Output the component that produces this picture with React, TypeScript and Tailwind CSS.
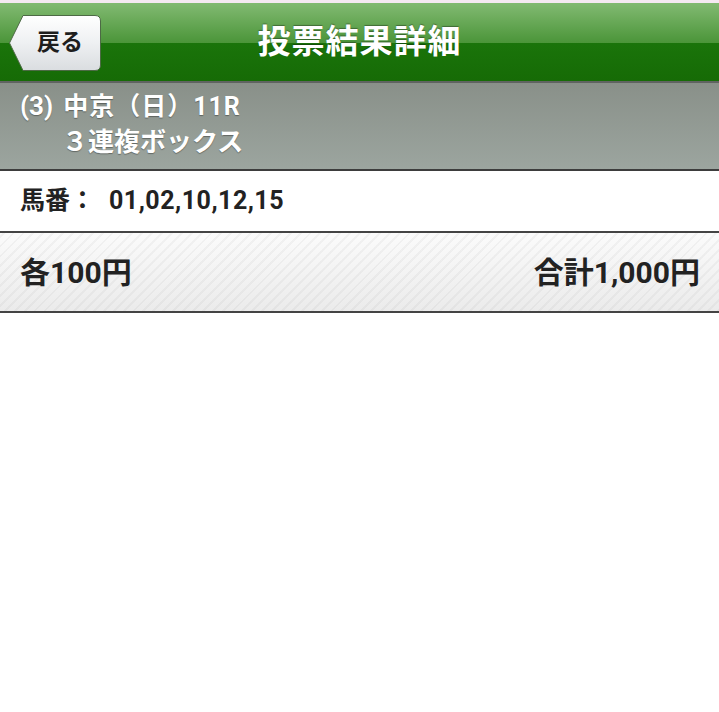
export default function App() {
  return (
    <div className="min-h-[712px] w-full bg-white" style={{ fontFamily: 'Roboto, "Noto Sans CJK JP", sans-serif' }}>
      <div className="h-[3px] bg-[#f5e9f2]" />
      <header className="relative flex h-[80px] items-center justify-center border-b-2 border-[#5f6360] bg-[linear-gradient(to_bottom,#82ba72_0%,#4b9539_51%,#1a740a_51%,#166b06_100%)]">
        <button className="absolute left-[9px] top-[12px] flex h-[56px] w-[92px] items-center justify-center pl-[10px]">
          <svg className="absolute inset-0" width="92" height="56" viewBox="0 0 92 56">
            <defs>
              <linearGradient id="bk" x1="0" y1="0" x2="0" y2="1">
                <stop offset="0" stopColor="#ffffff" />
                <stop offset="0.5" stopColor="#eef0f2" />
                <stop offset="1" stopColor="#dadde0" />
              </linearGradient>
            </defs>
            <path d="M14 0.5 H86 Q91.5 0.5 91.5 6 V50 Q91.5 55.5 86 55.5 H14 L0.5 28 Z" fill="url(#bk)" stroke="#4d6a45" strokeWidth="1" />
          </svg>
          <span className="relative text-[23px] font-bold text-[#1e1e1e]">戻る</span>
        </button>
        <h1 className="text-[33px] font-bold tracking-[1px] text-white [text-shadow:0_-1px_1px_rgba(0,0,0,0.35)]">投票結果詳細</h1>
      </header>
      <section className="flex h-[88px] flex-col justify-center border-b-2 border-[#3d3d3d] bg-[linear-gradient(to_bottom,#899089,#9ca59f)] px-5 pb-[3px] font-bold text-white [text-shadow:0_1px_1px_rgba(0,0,0,0.35)]">
        <div className="flex items-baseline leading-[34px]">
          <span className="text-[26px]">(3)</span>
          <span className="ml-[10px] text-[25px] tracking-[1px]">中京（日）11R</span>
        </div>
        <div className="pl-[42px] text-[26px] leading-[36px]">３連複ボックス</div>
      </section>
      <div className="flex h-[60px] items-center px-5 text-[25px] font-bold text-[#222]">
        <span>馬番：</span>
        <span className="ml-[14px] tracking-[0.5px]">01,02,10,12,15</span>
      </div>
      <div className="flex h-[82px] items-center justify-between border-y-2 border-[#444] bg-[repeating-linear-gradient(-45deg,rgba(0,0,0,0.035)_0px,rgba(0,0,0,0.035)_2px,transparent_2px,transparent_7px),linear-gradient(to_bottom,#fbfbfb,#ebebeb)] pl-5 pr-[19px] text-[30px] font-bold text-[#222]">
        <span>各100円</span>
        <span>合計1,000円</span>
      </div>
    </div>
  )
}
